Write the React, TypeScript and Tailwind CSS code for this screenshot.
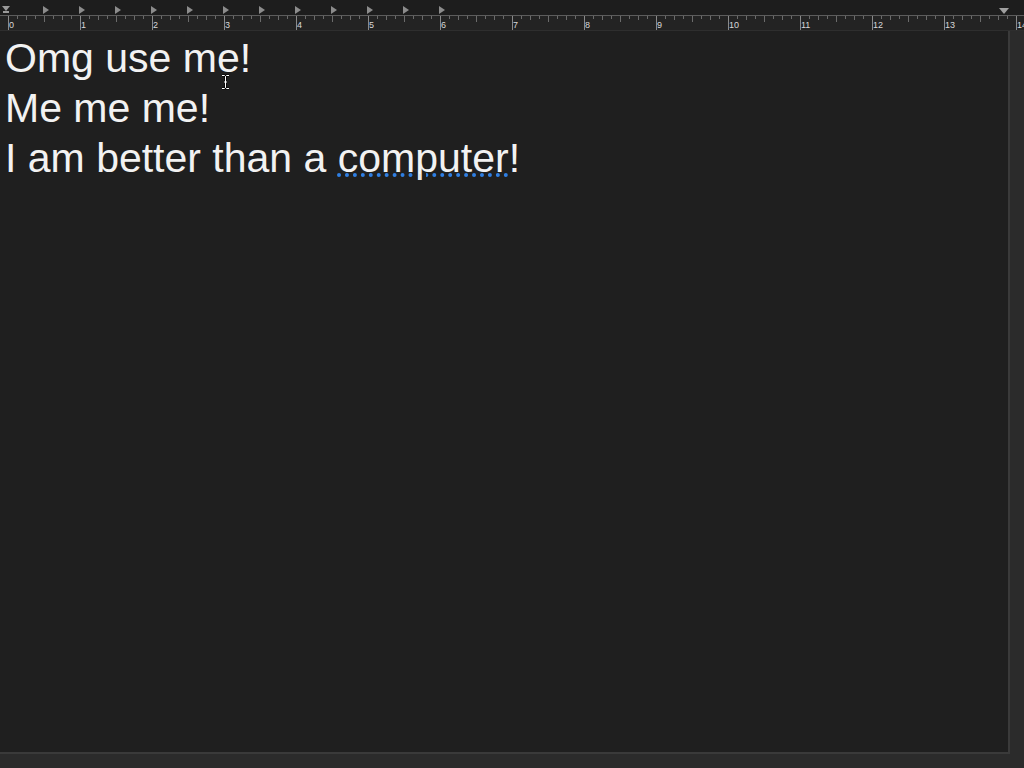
const UNIT = 72;
const ORIGIN = 8;

function Ruler() {
	const ticks = [];
	for (let x = ORIGIN; x <= 1024; x += 9) {
		const i = Math.round((x - ORIGIN) / 9);
		const major = i % 8 === 0;
		const half = i % 4 === 0;
		const h = major ? 14 : half ? 6 : i % 2 === 0 ? 4 : 3;
		ticks.push(
			<line
				key={x}
				x1={x + 0.5}
				x2={x + 0.5}
				y1={16}
				y2={16 + h}
				stroke={major ? "#8a8a8a" : "#6b6b6b"}
				strokeWidth={1}
			/>,
		);
	}
	const tabs = [];
	for (let i = 1; i <= 12; i++) {
		const x = ORIGIN + i * 36;
		tabs.push(
			<polygon
				key={i}
				points={`${x - 1},6 ${x + 5},10 ${x - 1},14`}
				fill="#8c8c8c"
			/>,
		);
	}
	const labels = [];
	for (let n = 0; n <= 14; n++) {
		labels.push(
			<text
				key={n}
				x={ORIGIN + n * UNIT + 1}
				y={28}
				fontSize={9}
				fill="#d8d8d8"
				fontFamily="'Liberation Sans', Arial, sans-serif"
			>
				{n}
			</text>,
		);
	}
	return (
		<div className="h-[31px] bg-[#232323] border-b border-[#2e2e2e]">
			<svg width={1024} height={31} className="block">
				<rect x={0} y={0} width={1024} height={15} fill="#1d1d1d" />
				<line x1={0} x2={1024} y1={15.5} y2={15.5} stroke="#5c5c5c" />
				{ticks}
				{tabs}
				{labels}
				<polygon points="2,6 10,6 6,11" fill="#9a9a9a" />
				<rect x={3} y={11} width={6} height={2} fill="#9a9a9a" />
				<polygon points="999,8 1009,8 1004,14" fill="#a0a0a0" />
			</svg>
		</div>
	);
}

function IBeam() {
	return (
		<svg
			width={9}
			height={16}
			viewBox="0 0 9 16"
			className="absolute left-[221px] top-[43px]"
			aria-hidden="true"
		>
			<path
				d="M1 1.5h2.5l1 1 1-1H8M4.5 2.5v11M1 14.5h2.5l1-1 1 1H8M3 8h3"
				fill="none"
				stroke="#000"
				strokeWidth={2.2}
			/>
			<path
				d="M1 1.5h2.5l1 1 1-1H8M4.5 2.5v11M1 14.5h2.5l1-1 1 1H8M3 8h3"
				fill="none"
				stroke="#fff"
				strokeWidth={1}
			/>
		</svg>
	);
}

export default function App() {
	return (
		<div className="w-[1024px] h-[768px] flex flex-col bg-[#2b2b2b] overflow-hidden font-['Liberation_Sans',Arial,sans-serif]">
			<Ruler />
			<div className="flex flex-1 min-h-0">
				<div className="relative flex-1 bg-[#1f1f1f] border-r-2 border-b-2 border-[#3a3a3a] pl-[5px] pt-[2px]">
					<div className="text-[41px] leading-[50px] text-[#f2f2f2]">
						<p>Omg use me!</p>
						<p>Me me me!</p>
						<p>
							I am better than a{" "}
							<span className="relative underline decoration-dotted decoration-[#2f7fe3] decoration-[4px] underline-offset-[1px]">
								computer
								<span className="absolute left-[81px] top-[39px] w-[2px] h-[6px] bg-[#e6e6e6]" />
							</span>
							!
						</p>
					</div>
					<IBeam />
				</div>
				<div className="w-[14px] bg-[#2b2b2b]" />
			</div>
			<div className="h-[14px] bg-[#2b2b2b]" />
		</div>
	);
}
